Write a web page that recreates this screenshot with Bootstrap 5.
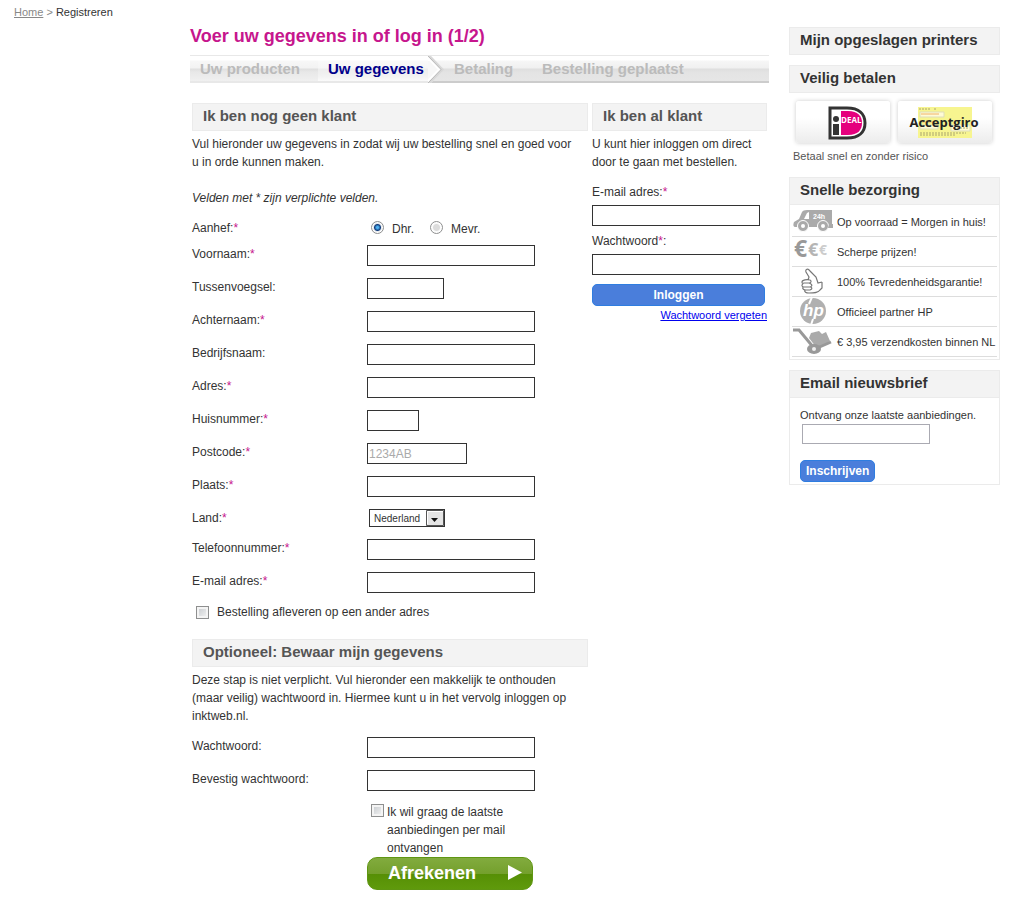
<!DOCTYPE html>
<html lang="nl">
<head>
<meta charset="utf-8">
<meta name="viewport" content="width=device-width, initial-scale=1">
<title>Registreren</title>
<link href="https://cdn.jsdelivr.net/npm/bootstrap@5.3.0/dist/css/bootstrap.min.css" rel="stylesheet">
<style>
body{font-family:"Liberation Sans",Arial,sans-serif;font-size:12px;line-height:18px;color:#333;background:#fff}
.crumbs{padding:3px 14px 0;height:24px;font-size:11px}
.crumbs a,.crumbs .sep{color:#888}
.page-grid{display:grid;gap:20px;padding:0 15px}
@media(min-width:992px){.page-grid{grid-template-columns:minmax(0,1fr) 211px;padding-left:190px}}
aside{padding-top:3px}
.page-title{font-size:18px;line-height:24px;font-weight:bold;color:#c6168d;margin:0 0 7px}
/* order progress */
.steps{height:28px;border-top:1px solid #e8e8e8;border-bottom:2px solid #ccc;background:linear-gradient(#fff 0 4px,#f6f6f6 5px,#f0f0f0 12px,#dedede 13px,#e4e4e4 17px,#e6e6e6);font-size:15px;line-height:26px;font-weight:bold;color:#bbb}
.steps li{white-space:nowrap}
.steps .past{width:128px;height:27px;padding-left:10px;background:linear-gradient(#fff 0 4px,#f7f7f7 5px,#f3f3f3 12px,#dfdfdf 13px,#e8e8e8 16px,#f0f0f0 25px,#e8e8e8 25px)}
.steps .now{width:110px;height:27px;padding-left:10px;color:#00008b;background:linear-gradient(#fff 0 4px,#f9f9f9 5px,#f6f6f6 12px,#ededed 13px,#f2f2f2 20px,#fafafa 25px,#e8e8e8 25px)}
.steps svg{position:absolute;left:100%;top:0}
.steps .later{width:88px;margin-left:26px}
.columns{display:grid;gap:4px;padding:20px 2px 0}
@media(min-width:768px){.columns{grid-template-columns:minmax(0,1fr) 175px}}
.bar{height:28px;margin:0;padding:0 10px;border:1px solid #ebebeb;background:#f3f3f3;font-size:15px;line-height:24px;font-weight:bold;color:#555}
aside .bar{color:#333}
.intro{margin:4px 0 12px;padding-right:10px}
.hint{margin:18px 0 12px}
/* form rows */
.line{display:flex;height:33px}
.line>label{width:175px;flex:none}
.line-short{height:30px}
.line-radio{height:26px}
.head-label{width:175px;flex:none}
.line-radio>label{width:auto;padding-top:1px}
.req{color:#c6168d}
.field{height:21px;width:168px;padding:0 1px;border:1px solid #333;border-radius:0;background:#fff;font-size:12px;line-height:18px;color:#333}
.field::placeholder{color:#aaa;opacity:1}
.w-77{width:77px}.w-52{width:52px}.w-100px{width:100px}
.land{appearance:none;width:76px;height:18px;margin-left:2px;border:1px solid #333;border-radius:0;padding:0 0 0 4px;font-size:10px;line-height:15px;color:#333;
background:#fff url("data:image/svg+xml,%3Csvg xmlns='http://www.w3.org/2000/svg' width='18' height='16'%3E%3Cpath d='M.5.5h17v15H.5z' fill='%23e4e4e4' stroke='%23555'/%3E%3Cpath d='M1.5 14V1.500H17' fill='none' stroke='%23fff'/%3E%3Cpath d='M5 8h7l-3.500 4z' fill='%23111'/%3E%3C/svg%3E") right top/18px 16px no-repeat}
.tick{appearance:none;width:13px;height:13px;flex:none;margin:1px 0 0;border:1px solid #8e8f8f;background:linear-gradient(135deg,#c4c8cc,#f6f6f6);box-shadow:inset 0 0 0 2px #f4f4f4}
.tick:checked{background:#316fc0}
.round{appearance:none;width:13px;height:13px;margin:2px 8px 0 4px;border:1px solid #8e8f8f;border-radius:50%;background:radial-gradient(#dcdcdc 0 3px,#fafafa 4px);box-shadow:inset 0 0 0 1px #fff}
.round:checked{background:radial-gradient(circle,#4db0f0 0 1px,#123c7c 3px,#e4e8ec 4px)}
.round.second{margin-left:16px}
.other{gap:8px;padding-left:4px;margin:-2px 0 18px}
.other .tick{margin-top:3px}
.login-label{margin-bottom:4px}
.second-label{margin-top:6px}
.blue-btn{height:22px;border:1px solid #2f7de0;border-radius:5px;background:#4a7edb;color:#fff;font-size:12px;line-height:18px;font-weight:bold;padding:0 5px}
.login-btn{display:block;width:173px;margin-top:9px}
.forgot{font-size:11px;color:#00e}
.opt-mail{width:150px;margin-left:175px;padding-left:4px;gap:3px}
.order-btn{display:flex;align-items:center;justify-content:space-between;width:166px;height:33px;margin-left:175px;padding:0 10px 2px 20px;border:1px solid #5f9612;border-radius:10px;background:linear-gradient(#82ab3e,#74a02d 50%,#568f05 51%,#5f9a0c);color:#fff;font-size:18px;font-weight:bold}
/* sidebar */
.gap-below{margin-bottom:10px}
.pays{gap:8px;padding:8px 8px 0 7px}
.pay{height:42px;border-radius:3px;background:linear-gradient(#fff 40%,#ececec);box-shadow:0 0 4px #ccc}
.risk{font-size:11px;margin:4px 4px 12px;color:#555}
.panel{border:1px solid #ebebeb}
.panel .bar{margin:-1px -1px 0}
.usps{padding-bottom:2px}
.usps .bar{margin-bottom:2px}
.usp{height:30px;margin:0 2px;border-bottom:1px solid #ddd;font-size:11px}
.usp svg{width:42px;height:29px;flex:none;margin-right:3px;overflow:visible}
.news{padding:8px 10px 2px;font-size:11px}
.news .field{display:block;width:128px;height:20px;margin:0 0 16px 2px;border-color:#aaaab2}
</style>
</head>
<body>
<nav class="crumbs" aria-label="Kruimelpad"><a href="#">Home</a> <span class="sep">&gt;</span> <span>Registreren</span></nav>
<div class="page-grid">
<main>
<h1 class="page-title">Voer uw gegevens in of log in (1/2)</h1>
<ol class="steps d-flex list-unstyled mb-0">
<li class="past">Uw producten</li>
<li class="now position-relative" aria-current="step">Uw gegevens
<svg width="18" height="27" aria-hidden="true"><path d="M0 0H3L15 13.500 3 27H0z" fill="#f7f7f7"/><path d="M0 0H3L8 5H0z" fill="#fff"/><path d="M1 0L14 13.500 1 27" fill="none" stroke="#d8d8d8" stroke-width="3"/><path d="M0 0L13 13.500 0 27" fill="none" stroke="#b8b8b8"/><path d="M-2 0L11 13.500 -2 27" fill="none" stroke="#fff" stroke-width="2"/></svg></li>
<li class="later">Betaling</li>
<li>Bestelling geplaatst</li>
</ol>
<div class="columns">
<form>
<h2 class="bar">Ik ben nog geen klant</h2>
<p class="intro">Vul hieronder uw gegevens in zodat wij uw bestelling snel en goed voor u in orde kunnen maken.</p>
<p class="hint"><em>Velden met * zijn verplichte velden.</em></p>
<div class="line line-radio" role="radiogroup" aria-labelledby="aanhef">
<span id="aanhef" class="head-label">Aanhef:<span class="req">*</span></span>
<input class="round" type="radio" name="aanhef" id="dhr" checked><label for="dhr">Dhr.</label>
<input class="round second" type="radio" name="aanhef" id="mevr"><label for="mevr">Mevr.</label>
</div>
<div class="line"><label for="voornaam">Voornaam:<span class="req">*</span></label><input class="field" id="voornaam"></div>
<div class="line"><label for="tussen">Tussenvoegsel:</label><input class="field w-77" id="tussen"></div>
<div class="line"><label for="achter">Achternaam:<span class="req">*</span></label><input class="field" id="achter"></div>
<div class="line"><label for="bedrijf">Bedrijfsnaam:</label><input class="field" id="bedrijf"></div>
<div class="line"><label for="adres">Adres:<span class="req">*</span></label><input class="field" id="adres"></div>
<div class="line"><label for="huis">Huisnummer:<span class="req">*</span></label><input class="field w-52" id="huis"></div>
<div class="line"><label for="postcode">Postcode:<span class="req">*</span></label><input class="field w-100px" id="postcode" placeholder="1234AB"></div>
<div class="line"><label for="plaats">Plaats:<span class="req">*</span></label><input class="field" id="plaats"></div>
<div class="line line-short"><label for="land">Land:<span class="req">*</span></label><select class="land" id="land"><option>Nederland</option><option>België</option></select></div>
<div class="line"><label for="tel">Telefoonnummer:<span class="req">*</span></label><input class="field" type="tel" id="tel"></div>
<div class="line"><label for="email">E-mail adres:<span class="req">*</span></label><input class="field" type="email" id="email"></div>
<div class="d-flex other"><input class="tick" type="checkbox" id="ander"><label for="ander">Bestelling afleveren op een ander adres</label></div>
<h2 class="bar">Optioneel: Bewaar mijn gegevens</h2>
<p class="intro">Deze stap is niet verplicht. Vul hieronder een makkelijk te onthouden (maar veilig) wachtwoord in. Hiermee kunt u in het vervolg inloggen op inktweb.nl.</p>
<div class="line"><label for="pw1">Wachtwoord:</label><input class="field" type="password" id="pw1"></div>
<div class="line"><label for="pw2">Bevestig wachtwoord:</label><input class="field" type="password" id="pw2"></div>
<div class="d-flex opt-mail"><input class="tick" type="checkbox" id="mail"><label for="mail">Ik wil graag de laatste aanbiedingen per mail ontvangen</label></div>
<button class="order-btn" type="submit">Afrekenen<svg width="14" height="15" aria-hidden="true"><path d="M0 0L14 7.500 0 15z" fill="#fff"/></svg></button>
</form>
<form>
<h2 class="bar">Ik ben al klant</h2>
<p class="intro">U kunt hier inloggen om direct door te gaan met bestellen.</p>
<label class="d-block login-label" for="lmail">E-mail adres:<span class="req">*</span></label>
<input class="field d-block" type="email" id="lmail">
<label class="d-block login-label second-label" for="lpw">Wachtwoord<span class="req">*</span>:</label>
<input class="field d-block" type="password" id="lpw">
<button class="blue-btn login-btn" type="submit">Inloggen</button>
<a class="forgot d-block text-end" href="#">Wachtwoord vergeten</a>
</form>
</div>
</main>
<aside>
<h2 class="bar gap-below">Mijn opgeslagen printers</h2>
<h2 class="bar">Veilig betalen</h2>
<div class="d-flex pays">
<div class="pay flex-fill d-flex justify-content-center"><svg width="94" height="42" role="img" aria-label="iDEAL"><path d="M34 7H51C63 7 69 13 69 22S63 37 51 37H34z" fill="#fff" stroke="#333" stroke-width="3"/><path d="M45 10H52C62 10 66 15 66 22S62 34 52 34H45z" fill="#e5007d"/><circle cx="40" cy="18" r="3" fill="#333"/><path d="M37 23h6v11h-6z" fill="#333"/><text x="45" y="22" font-family="Open Sans" font-weight="bold" font-size="8" fill="#fff">DEAL</text></svg></div>
<div class="pay flex-fill d-flex justify-content-center"><svg width="94" height="42" role="img" aria-label="Acceptgiro"><path d="M20 6h54v31H20z" fill="#f7f590"/><path d="M22 11h24v5H22zM22 24h18v4H22zM53 24h19v6H53z" fill="#fffbd5" stroke="#ddb"/><path d="M21 8h11m4 0h3M22 32h46M22 34h36M22 20h12M56 27h14" stroke="#aaa56e" stroke-dasharray="2 1"/><path d="M23 13h18M24 21h15" stroke="#f0b26a"/><text x="46" y="26" text-anchor="middle" font-family="Open Sans" font-weight="bold" font-size="13" fill="#222">Acceptgiro</text></svg></div>
</div>
<p class="risk">Betaal snel en zonder risico</p>
<section class="panel gap-below usps">
<h2 class="bar">Snelle bezorging</h2>
<div class="usp d-flex align-items-center"><svg viewBox="0 0 42 29" aria-hidden="true"><path d="M15 3H40V20H4C1 20 1 18 2 15L7 12 10 5Q11 3 15 3z" fill="#aaa"/><path d="M15 6L12 12H17V5z" fill="#fff"/><g fill="#aaa" stroke="#fff"><circle cx="11" cy="19" r="5.500"/><circle cx="31" cy="19" r="5.500"/></g><g fill="#fff"><circle cx="11" cy="19" r="2"/><circle cx="31" cy="19" r="2"/></g><path d="M37 17h4v4h-5z" fill="#aaa"/><text x="21" y="12" font-family="Liberation Sans" font-weight="bold" font-size="7" fill="#fff">24h</text></svg><span>Op voorraad = Morgen in huis!</span></div>
<div class="usp d-flex align-items-center"><svg viewBox="0 0 42 29" aria-hidden="true" font-family="Open Sans" font-weight="bold"><text x="2" y="20" font-size="23" fill="#999">€</text><text x="16" y="19" font-size="18" fill="#b5b5b5">€</text><text x="27" y="18" font-size="14" fill="#ccc">€</text></svg><span>Scherpe prijzen!</span></div>
<div class="usp d-flex align-items-center"><svg viewBox="0 0 42 29" aria-hidden="true" fill="#fff" stroke="#777" stroke-width="1.200"><path d="M16 13L17 10 14 5C13 2 16 1 18 4L24 10 26 16 30 15M10 15C10 13 15 12 18 13 20 14 19 16 17 16H12Q10 17 10 15zM11 17C9 18 10 20 12 20H18C21 19 20 17 17 16M11 20C10 22 12 23 14 23H18C21 22 20 20 18 20M13 23C12 25 14 26 17 26 22 26 26 26 28 23L30 21V15"/></svg><span>100% Tevredenheidsgarantie!</span></div>
<div class="usp d-flex align-items-center"><svg viewBox="0 0 42 29" aria-hidden="true"><circle cx="21" cy="14" r="13" fill="#b0b0b0"/><path d="M20 0L17 7M21 22L19 28" stroke="#fff" stroke-width="2"/><text x="11" y="19" font-family="Liberation Sans" font-style="italic" font-size="17" font-weight="bold" fill="#fff">hp</text></svg><span>Officieel partner HP</span></div>
<div class="usp d-flex align-items-center"><svg viewBox="0 0 42 29" aria-hidden="true"><path d="M1 3H7L22 21" fill="none" stroke="#999" stroke-width="3"/><path d="M17 11L19 6 27 4 30 7 34 5 38 14 32 18 24 20z" fill="#aaa"/><path d="M23 22L39 15" stroke="#999" stroke-width="3"/><ellipse cx="22" cy="22" rx="7" ry="5" fill="#999"/><ellipse cx="22" cy="22" rx="2" ry="2" fill="#eee"/></svg><span>€ 3,95 verzendkosten binnen NL</span></div>
</section>
<form class="panel">
<h2 class="bar">Email nieuwsbrief</h2>
<div class="news"><label for="nieuws">Ontvang onze laatste aanbiedingen.</label><input class="field" type="email" id="nieuws"><button class="blue-btn" type="submit">Inschrijven</button></div>
</form>
</aside>
</div>
<script src="https://cdn.jsdelivr.net/npm/bootstrap@5.3.0/dist/js/bootstrap.bundle.min.js"></script>
</body>
</html>
